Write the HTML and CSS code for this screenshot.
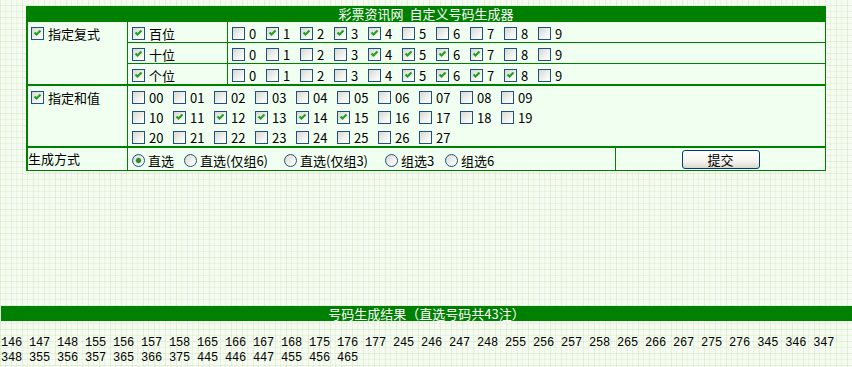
FILE: index.html
```html
<!DOCTYPE html>
<html lang="zh-CN">
<head>
    <meta charset="UTF-8">
    <title>彩票资讯网 自定义号码生成器</title>
    <link rel="stylesheet" href="styles.css">
</head>
<body>
    <div class="wrap">
        <div class="title">彩票资讯网&nbsp;&nbsp;自定义号码生成器</div>
        <div class="panel">
            <!-- 指定复式 -->
            <div class="grp">
                <div class="lbl"><label class="line"><input type="checkbox" class="cb" checked>指定复式</label></div>
                <div class="rows">
                    <div class="row">
                        <div class="sub"><label class="line"><input type="checkbox" class="cb" checked>百位</label></div>
                        <div class="digits">
                            <label class="opt"><input type="checkbox" class="cb">0</label>
                            <label class="opt"><input type="checkbox" class="cb" checked>1</label>
                            <label class="opt"><input type="checkbox" class="cb" checked>2</label>
                            <label class="opt"><input type="checkbox" class="cb" checked>3</label>
                            <label class="opt"><input type="checkbox" class="cb" checked>4</label>
                            <label class="opt"><input type="checkbox" class="cb">5</label>
                            <label class="opt"><input type="checkbox" class="cb">6</label>
                            <label class="opt"><input type="checkbox" class="cb">7</label>
                            <label class="opt"><input type="checkbox" class="cb">8</label>
                            <label class="opt"><input type="checkbox" class="cb">9</label>
                        </div>
                    </div>
                    <div class="row">
                        <div class="sub"><label class="line"><input type="checkbox" class="cb" checked>十位</label></div>
                        <div class="digits">
                            <label class="opt"><input type="checkbox" class="cb">0</label>
                            <label class="opt"><input type="checkbox" class="cb">1</label>
                            <label class="opt"><input type="checkbox" class="cb">2</label>
                            <label class="opt"><input type="checkbox" class="cb">3</label>
                            <label class="opt"><input type="checkbox" class="cb" checked>4</label>
                            <label class="opt"><input type="checkbox" class="cb" checked>5</label>
                            <label class="opt"><input type="checkbox" class="cb" checked>6</label>
                            <label class="opt"><input type="checkbox" class="cb" checked>7</label>
                            <label class="opt"><input type="checkbox" class="cb">8</label>
                            <label class="opt"><input type="checkbox" class="cb">9</label>
                        </div>
                    </div>
                    <div class="row">
                        <div class="sub"><label class="line"><input type="checkbox" class="cb" checked>个位</label></div>
                        <div class="digits">
                            <label class="opt"><input type="checkbox" class="cb">0</label>
                            <label class="opt"><input type="checkbox" class="cb">1</label>
                            <label class="opt"><input type="checkbox" class="cb">2</label>
                            <label class="opt"><input type="checkbox" class="cb">3</label>
                            <label class="opt"><input type="checkbox" class="cb">4</label>
                            <label class="opt"><input type="checkbox" class="cb" checked>5</label>
                            <label class="opt"><input type="checkbox" class="cb" checked>6</label>
                            <label class="opt"><input type="checkbox" class="cb" checked>7</label>
                            <label class="opt"><input type="checkbox" class="cb" checked>8</label>
                            <label class="opt"><input type="checkbox" class="cb">9</label>
                        </div>
                    </div>
                </div>
            </div>
            <!-- 指定和值 -->
            <div class="grp">
                <div class="lbl"><label class="line"><input type="checkbox" class="cb" checked>指定和值</label></div>
                <div class="sums">
                    <div class="srow">
                        <label class="opt2"><input type="checkbox" class="cb">00</label>
                        <label class="opt2"><input type="checkbox" class="cb">01</label>
                        <label class="opt2"><input type="checkbox" class="cb">02</label>
                        <label class="opt2"><input type="checkbox" class="cb">03</label>
                        <label class="opt2"><input type="checkbox" class="cb">04</label>
                        <label class="opt2"><input type="checkbox" class="cb">05</label>
                        <label class="opt2"><input type="checkbox" class="cb">06</label>
                        <label class="opt2"><input type="checkbox" class="cb">07</label>
                        <label class="opt2"><input type="checkbox" class="cb">08</label>
                        <label class="opt2"><input type="checkbox" class="cb">09</label>
                    </div>
                    <div class="srow">
                        <label class="opt2"><input type="checkbox" class="cb">10</label>
                        <label class="opt2"><input type="checkbox" class="cb" checked>11</label>
                        <label class="opt2"><input type="checkbox" class="cb" checked>12</label>
                        <label class="opt2"><input type="checkbox" class="cb" checked>13</label>
                        <label class="opt2"><input type="checkbox" class="cb" checked>14</label>
                        <label class="opt2"><input type="checkbox" class="cb" checked>15</label>
                        <label class="opt2"><input type="checkbox" class="cb">16</label>
                        <label class="opt2"><input type="checkbox" class="cb">17</label>
                        <label class="opt2"><input type="checkbox" class="cb">18</label>
                        <label class="opt2"><input type="checkbox" class="cb">19</label>
                    </div>
                    <div class="srow">
                        <label class="opt2"><input type="checkbox" class="cb">20</label>
                        <label class="opt2"><input type="checkbox" class="cb">21</label>
                        <label class="opt2"><input type="checkbox" class="cb">22</label>
                        <label class="opt2"><input type="checkbox" class="cb">23</label>
                        <label class="opt2"><input type="checkbox" class="cb">24</label>
                        <label class="opt2"><input type="checkbox" class="cb">25</label>
                        <label class="opt2"><input type="checkbox" class="cb">26</label>
                        <label class="opt2"><input type="checkbox" class="cb">27</label>
                    </div>
                </div>
            </div>
            <!-- 生成方式 -->
            <div class="grp mode">
                <div class="lbl plain">生成方式</div>
                <div class="modes">
                    <label class="ro"><input type="radio" name="m" class="rd" checked>直选</label>
                    <label class="ro"><input type="radio" name="m" class="rd">直选(仅组6)</label>
                    <label class="ro"><input type="radio" name="m" class="rd">直选(仅组3)</label>
                    <label class="ro"><input type="radio" name="m" class="rd">组选3</label>
                    <label class="ro"><input type="radio" name="m" class="rd">组选6</label>
                </div>
                <div class="act"><button class="btn">提交</button></div>
            </div>
        </div>
    </div>

    <div class="rbar">号码生成结果（直选号码共43注）</div>
    <div class="nums">146 147 148 155 156 157 158 165 166 167 168 175 176 177 245 246 247 248 255 256 257 258 265 266 267 275 276 345 346 347 348 355 356 357 365 366 375 445 446 447 455 456 465</div>
</body>
</html>
```

FILE: styles.css
```css
*{margin:0;padding:0;box-sizing:border-box;}
body{
    font-family:"Noto Sans CJK SC","Liberation Sans",sans-serif;
    font-size:13px;
    color:#000;
    background-color:#f5fbf0;
    background-image:
        repeating-linear-gradient(90deg,rgba(190,220,170,.35) 0 1px,transparent 1px 5px,rgba(190,220,170,.22) 5px 6px,transparent 6px 11px),
        repeating-linear-gradient(0deg,rgba(190,220,170,.35) 0 1px,transparent 1px 6px,rgba(190,220,170,.22) 6px 7px,transparent 7px 12px);
}
.wrap{width:800px;margin:6px 0 0 26px;}
.title{height:16px;line-height:16px;background:#008000;color:#fff;text-align:center;}
.panel{background:#f0fff0;border-left:2px solid #008000;border-right:1px solid #008000;border-bottom:1px solid #008000;}

.grp{display:flex;border-bottom:2px solid #008000;}
.grp:last-child{border-bottom:none;}
.lbl{width:100px;flex:none;border-right:1px solid #008000;padding-left:3px;}
.line{display:flex;align-items:center;height:20px;padding-top:3px;}

.rows{flex:1;display:flex;flex-direction:column;}
.row{display:flex;height:21px;border-bottom:1px solid #008000;}
.row:last-child{height:20px;border-bottom:none;}
.sub{width:100px;flex:none;border-right:1px solid #008000;padding-left:4px;}
.digits{flex:1;display:flex;align-items:center;padding:3px 0 0 4px;height:20px;}
.opt{display:flex;align-items:center;width:34px;flex:none;}

.sums{flex:1;padding-left:4px;}
.srow{display:flex;align-items:center;height:20px;padding-top:3px;}
.opt2{display:flex;align-items:center;width:41px;flex:none;}

.cb{
    -webkit-appearance:none;appearance:none;
    width:13px;height:13px;flex:none;
    margin:0 4px 0 0;
    border:1px solid #1c5180;
    background:linear-gradient(135deg,#d8d8d2,#f6f6f3 70%,#fff);
}
.cb:checked{
    background:
        url("data:image/svg+xml,%3Csvg xmlns='http://www.w3.org/2000/svg' viewBox='0 0 11 11'%3E%3Cpath d='M2.5 4.5l2 2 4-4' fill='none' stroke='%2321a121' stroke-width='2.2'/%3E%3C/svg%3E") center/11px 11px no-repeat,
        linear-gradient(135deg,#d8d8d2,#f6f6f3 70%,#fff);
}

.mode{height:22px;}
.plain{padding-left:0;display:flex;align-items:center;padding-bottom:2px;}
.modes{
    width:488px;flex:none;border-right:1px solid #008000;
    display:grid;grid-template-columns:52px 100px 101px 60px auto;align-items:center;
    padding:3px 0 0 4px;
}
.ro{display:flex;align-items:center;}
.rd{
    -webkit-appearance:none;appearance:none;
    width:13px;height:13px;flex:none;
    margin:0 3px 0 0;
    border:1px solid #1c5180;
    border-radius:50%;
    background:linear-gradient(135deg,#d8d8d2,#f6f6f3 70%,#fff);
}
.rd:checked{
    background:
        radial-gradient(circle,#2f8a2f 0 2px,#6fbf6f 2.6px,transparent 3.2px),
        linear-gradient(135deg,#d8d8d2,#f6f6f3 70%,#fff);
}
.act{flex:1;display:flex;align-items:center;justify-content:center;}
.btn{
    width:78px;height:19px;
    font-family:inherit;font-size:13px;line-height:15px;color:#000;
    border:1px solid #003c74;border-radius:3px;
    background:linear-gradient(#fff,#f4f3ee 60%,#dcd8cc);
}

.rbar{height:15px;line-height:15px;margin:135px 0 0 1px;background:#008000;color:#fff;text-align:center;}
.nums{
    margin-top:15px;padding-left:1px;
    font-family:"Liberation Mono",monospace;
    font-size:12px;letter-spacing:-0.2px;line-height:15px;
}
```
